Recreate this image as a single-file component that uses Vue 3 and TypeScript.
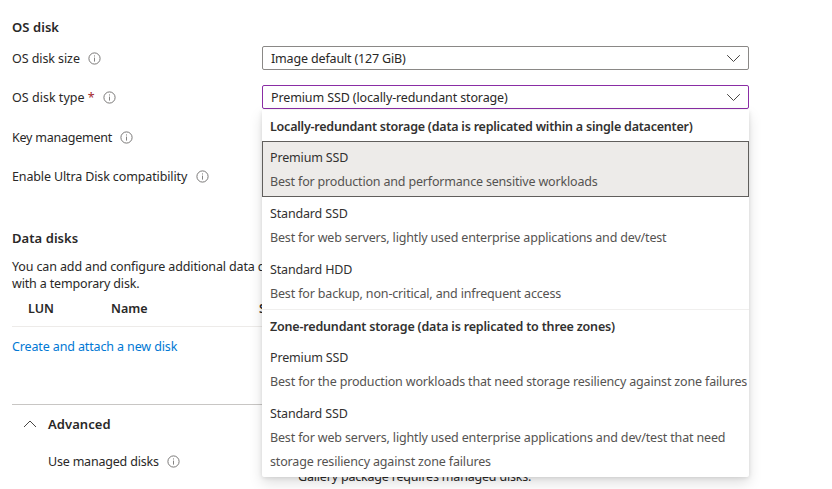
<script setup lang="ts">
import { defineComponent, h } from 'vue'

interface Option { title: string; lines: { text: string; cls: string }[]; selected?: boolean }
interface Group { label: string; cls: string; options: Option[] }

const InfoIcon = defineComponent({
  setup: () => () =>
    h('svg', { width: 13, height: 13, viewBox: '0 0 13 13', fill: 'none' }, [
      h('circle', { cx: 6.5, cy: 6.5, r: 5.6, stroke: '#737271', 'stroke-width': 0.95 }),
      h('path', { d: 'M6.5 5.6V9.6M6.5 3.4V4.5', stroke: '#858483', 'stroke-width': 1 }),
    ]),
})

const groups: Group[] = [
  {
    label: 'Locally-redundant storage (data is replicated within a single datacenter)',
    cls: 'g1',
    options: [
      { title: 'Premium SSD', selected: true, lines: [{ text: 'Best for production and performance sensitive workloads', cls: 'd1' }] },
      { title: 'Standard SSD', lines: [{ text: 'Best for web servers, lightly used enterprise applications and dev/test', cls: 'd2' }] },
      { title: 'Standard HDD', lines: [{ text: 'Best for backup, non-critical, and infrequent access', cls: 'd3' }] },
    ],
  },
  {
    label: 'Zone-redundant storage (data is replicated to three zones)',
    cls: 'g2',
    options: [
      { title: 'Premium SSD', lines: [{ text: 'Best for the production workloads that need storage resiliency against zone failures', cls: 'd4' }] },
      {
        title: 'Standard SSD',
        lines: [
          { text: 'Best for web servers, lightly used enterprise applications and dev/test that need', cls: 'd5' },
          { text: 'storage resiliency against zone failures', cls: 'd6' },
        ],
      },
    ],
  },
]
</script>

<template>
  <main class="page">
    <h3 class="heading">OS disk</h3>
    <div class="row">
      <div class="label"><span class="t-size">OS disk size</span><InfoIcon /></div>
      <div class="select">
        <span class="t-image">Image default (127 GiB)</span>
        <svg width="15" height="9" viewBox="0 0 15 9" fill="none"><path d="M1.2 1.2L7.5 7.5L13.8 1.2" stroke="#484644" /></svg>
      </div>
    </div>
    <div class="row">
      <div class="label"><span class="t-type">OS disk type <b class="star">*</b></span><InfoIcon /></div>
      <div class="select open">
        <span class="t-prem">Premium SSD (locally-redundant storage)</span>
        <svg width="15" height="9" viewBox="0 0 15 9" fill="none"><path d="M1.2 1.2L7.5 7.5L13.8 1.2" stroke="#484644" /></svg>
        <div class="menu">
          <section v-for="g in groups" :key="g.label" class="group">
            <div class="group-label"><span :class="g.cls">{{ g.label }}</span></div>
            <div v-for="o in g.options" :key="o.title" class="option" :class="{ selected: o.selected }">
              <div class="title"><span>{{ o.title }}</span></div>
              <div v-for="l in o.lines" :key="l.text" class="desc"><span :class="l.cls">{{ l.text }}</span></div>
            </div>
          </section>
        </div>
      </div>
    </div>
    <div class="row lower"><div class="label"><span class="t-key">Key management</span><InfoIcon /></div></div>
    <div class="row lower"><div class="label"><span class="t-ultra">Enable Ultra Disk compatibility</span><InfoIcon /></div></div>

    <h3 class="heading data">Data disks</h3>
    <p class="intro"><span class="t-intro">You can add and configure additional data disks</span><br /><span class="t-temp">with a temporary disk.</span></p>
    <div class="table-head"><span>LUN</span><span>Name</span><span>Size</span></div>
    <a class="link"><span>Create and attach a new disk</span></a>

    <section class="advanced">
      <div class="adv-head">
        <svg width="14" height="8" viewBox="0 0 14 8" fill="none"><path d="M1 7L7 1L13 7" stroke="#484644" /></svg>
        <h3>Advanced</h3>
      </div>
      <div class="managed"><span class="t-managed">Use managed disks</span><InfoIcon /></div>
      <p class="note"><span>Gallery package requires managed disks.</span></p>
    </section>
  </main>
</template>

<style>
body { overflow: hidden; background: #fff; }
</style>

<style scoped>
.page {
  box-sizing: border-box;
  width: 749px;
  height: 489px;
  padding: 18px 0 0 12px;
  font: 12.5px/18px "Noto Sans", "Open Sans", sans-serif;
  letter-spacing: -0.16px;
  color: #292827;
  white-space: nowrap;
}
h3, p { margin: 0; font-size: inherit; }
h3 { font-size: 13px; font-weight: 600; letter-spacing: 0.06px; }
.heading { height: 18px; margin-bottom: 10px; line-height: 18px; }
.row { display: flex; align-items: flex-start; height: 39.3px; }
.lower .label { height: 26px; }
.label { display: flex; align-items: center; gap: 8.4px; width: 250px; height: 25px; }
.t-size { letter-spacing: -0.08px; }
.t-type { letter-spacing: 0.02px; }
.t-key { letter-spacing: -0.24px; }
.t-ultra { letter-spacing: -0.13px; }
.t-prem { letter-spacing: -0.12px; }
.t-managed { letter-spacing: -0.2px; }
.t-intro { letter-spacing: -0.13px; }
.g1 { letter-spacing: -0.22px; }
.g2 { letter-spacing: -0.18px; }
.d1 { letter-spacing: -0.18px; }
.d2 { letter-spacing: -0.17px; }
.star { color: #a4262c; font-weight: 400; }
.select {
  position: relative;
  display: flex;
  align-items: center;
  justify-content: space-between;
  box-sizing: border-box;
  width: 487px;
  height: 24px;
  padding: 0 7px 0 8px;
  border: 1px solid #8a8886;
  border-radius: 2px;
}
.select > span { padding-top: 2px; }
.open { border-color: #8a2da5; }
.menu {
  position: absolute;
  top: 24px;
  left: -1px;
  width: 487px;
  height: 367px;
  background: #fff;
  border-radius: 0 0 2px 2px;
  box-shadow: 0 6px 14px rgba(0, 0, 0, .13), 0 1px 4px rgba(0, 0, 0, .11);
  color: #323130;
}
.group + .group { border-top: 1px solid #f0efee; }
.group-label { height: 31px; padding-left: 8px; line-height: 34px; font-weight: 600; }
.option { box-sizing: border-box; min-height: 56px; padding: 5px 0 3px 8px; line-height: 24px; }
.selected { padding: 4px 0 2px 7px; border: 1px solid #605e5c; background: #edebe9; }
.desc { color: #555351; }
.data { margin: 26px 0 11px; }
.intro { line-height: 17px; }
.table-head { display: grid; grid-template-columns: 83px 148px 1fr; height: 34px; padding-left: 16px; border-bottom: 1px solid #edebe9; font-weight: 600; letter-spacing: 0; line-height: 34px; }
.link { display: block; height: 77px; line-height: 39px; color: #0078d4; letter-spacing: -0.13px; }
.advanced { border-top: 1px solid #c8c6c4; }
.adv-head { display: flex; align-items: center; gap: 11px; height: 38px; padding-left: 11px; }
.managed { display: flex; align-items: center; gap: 8.4px; height: 37px; padding-left: 36px; }
.note { padding-left: 286px; line-height: 18px; margin-top: -12px; letter-spacing: -0.19px; }
</style>
